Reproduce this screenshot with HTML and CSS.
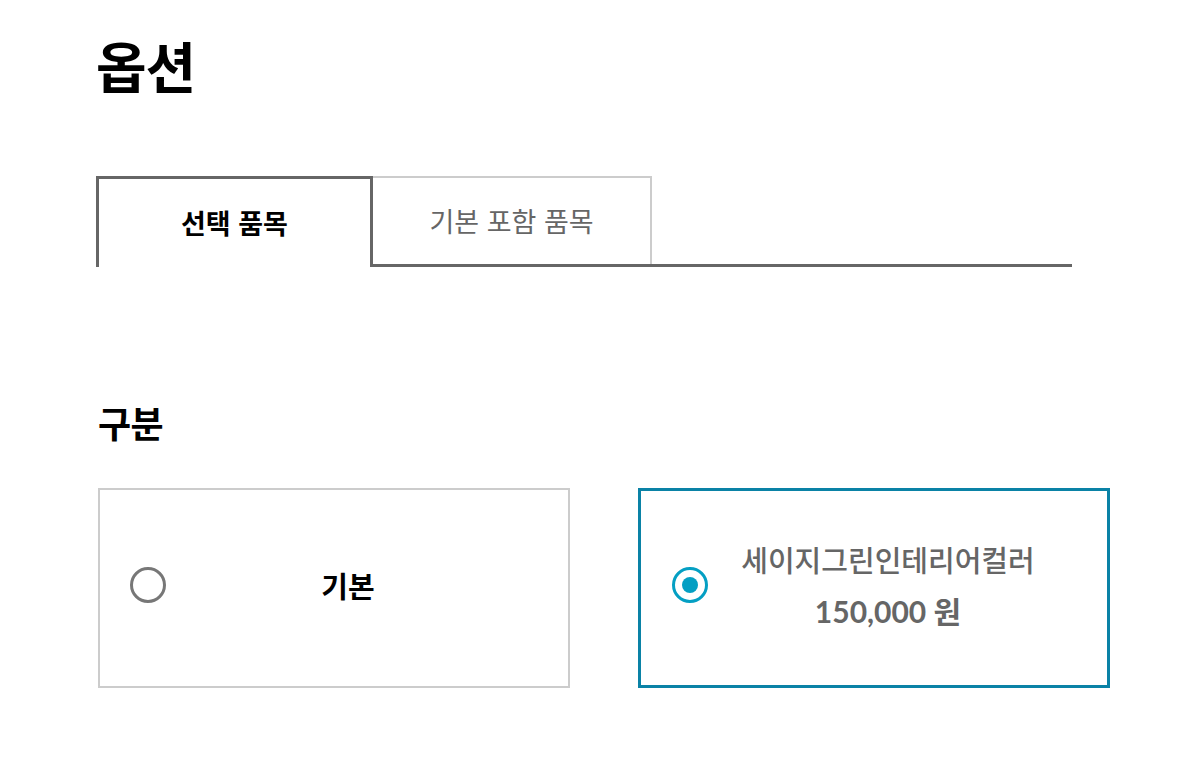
FILE: index.html
```html
<!DOCTYPE html>
<html lang="ko">
<head>
<meta charset="utf-8">
<link rel="stylesheet" href="styles.css">
</head>
<body>
<div class="page">
  <h1 class="title">옵션</h1>
  <div class="tabs">
    <div class="tab tab-active">선택 품목</div>
    <div class="tab tab-normal">기본 포함 품목</div>
  </div>
  <h2 class="section-title">구분</h2>
  <div class="options">
    <div class="card">
      <span class="radio"></span>
      <div class="card-text"><span class="name-bold">기본</span></div>
    </div>
    <div class="card card-selected">
      <span class="radio radio-on"><span class="dot"></span></span>
      <div class="card-text">
        <span class="name">세이지그린인테리어컬러</span>
        <span class="price">150,000 원</span>
      </div>
    </div>
  </div>
</div>
</body>
</html>
```
FILE: styles.css
```css
* { box-sizing: border-box; }
html, body { margin: 0; padding: 0; background: #fff; }
body { font-family: Lato, "Noto Sans CJK KR", sans-serif; color: #000; }
.page { padding: 24px 0 0 96px; width: 1180px; }
.title { margin: 0; font-family: "Noto Sans CJK KR", sans-serif; font-size: 55px; font-weight: 700; line-height: 80px; letter-spacing: -1px; }
.tabs { display: flex; margin-top: 72px; width: 976px; height: 91px; border-bottom: 3px solid #666; }
.tab { display: flex; align-items: center; justify-content: center; font-family: "Noto Sans CJK KR", sans-serif; font-size: 27px; padding-bottom: 2px; }
.tab-active { width: 277px; height: 91px; border: 3px solid #666; border-bottom: none; background: #fff; font-weight: 700; color: #000; margin-bottom: -3px; }
.tab-normal { width: 279px; height: 88px; border-top: 2px solid #ccc; border-right: 2px solid #ccc; color: #666; font-weight: 400; }
.section-title { margin: 131px 0 0 2px; font-family: "Noto Sans CJK KR", sans-serif; font-size: 36px; font-weight: 700; line-height: 48px; letter-spacing: -0.5px; }
.options { display: flex; gap: 68px; margin: 42px 0 0 2px; }
.card { display: flex; align-items: center; width: 472px; height: 200px; border: 2px solid #ccc; padding: 0 38px 6px 30px; }
.card-selected { border: 3px solid #0a82a6; padding: 0 39px 6px 31px; }
.radio { flex: none; width: 36px; height: 36px; border: 3px solid #777; border-radius: 50%; display: flex; align-items: center; justify-content: center; }
.radio-on { border-color: #049fc3; }
.dot { width: 16px; height: 16px; border-radius: 50%; background: #049fc3; }
.card-text { flex: 1; display: flex; flex-direction: column; align-items: center; gap: 12px; }
.name-bold { font-family: "Noto Sans CJK KR", sans-serif; font-size: 29px; font-weight: 700; color: #000; }
.name { font-family: "Noto Sans CJK KR", sans-serif; font-size: 29px; color: #666; font-weight: 500; line-height: 40px; }
.price { font-size: 30px; color: #666; font-weight: 700; line-height: 40px; }
```
